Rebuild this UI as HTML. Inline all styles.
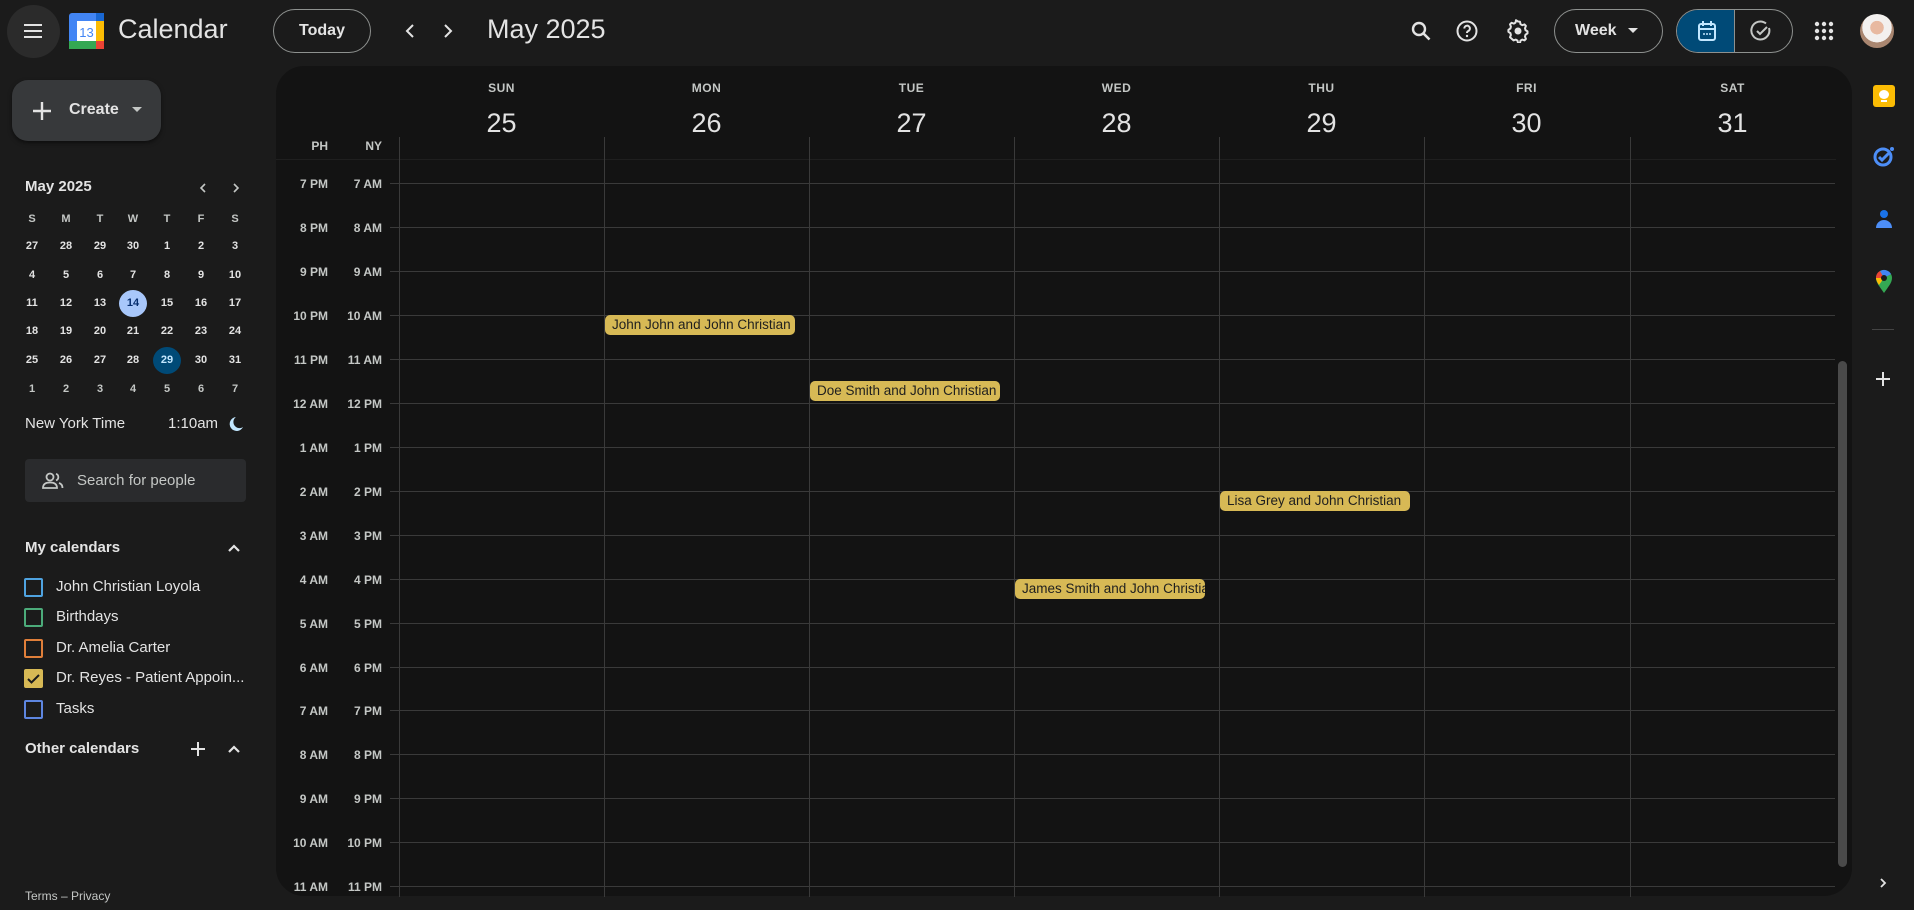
<!DOCTYPE html>
<html><head><meta charset="utf-8"><style>
*{box-sizing:border-box;margin:0;padding:0}
body{width:1914px;height:910px;background:#1b1b1b;font-family:"Liberation Sans",Arial,sans-serif;color:#e3e3e3;position:relative;overflow:hidden}
.a{position:absolute}
.panel{left:276px;top:66px;width:1576px;height:830px;background:#131313;border-radius:28px;overflow:hidden}
.hl{position:absolute;left:390px;width:1445px;height:1px;background:#3a3a3a}
.vl{position:absolute;width:1px;background:#3a3a3a}
.tl{position:absolute;font-size:12px;font-weight:bold;color:#c4c7c5;text-align:right;width:60px}
.dn{position:absolute;width:205px;text-align:center;font-size:12px;font-weight:bold;color:#c4c7c5;letter-spacing:.5px;top:81px}
.dd{position:absolute;width:205px;text-align:center;font-size:27px;color:#e3e3e3;top:108px}
.ev{position:absolute;height:20px;background:#d7b955;border-radius:5px;color:#1f1f1f;font-size:13.5px;line-height:20px;padding-left:7px;white-space:nowrap;overflow:hidden}
.mc{position:absolute;width:28px;text-align:center;font-size:11px;font-weight:bold;color:#e3e3e3;line-height:27px;height:27px;border-radius:50%}
.cb{position:absolute;left:24px;width:19px;height:19px;border:2px solid;border-radius:2px}
.ci{position:absolute;left:56px;font-size:15px;color:#e3e3e3}
</style></head><body>
<div class="a" style="left:7px;top:5px;width:53px;height:53px;border-radius:50%;background:#2b2b2b"></div>
<svg class="a" style="left:21px;top:19px" width="24" height="24" viewBox="0 0 24 24"><path d="M3 6h18M3 12h18M3 18h18" stroke="#e3e3e3" stroke-width="2"/></svg>
<svg class="a" style="left:69px;top:13px" width="35" height="36" viewBox="0 0 35 36"><rect x="0" y="0" width="35" height="36" rx="3" fill="#4285f4"/><rect x="27" y="0" width="8" height="28" fill="#fbbc04"/><rect x="0" y="28" width="27" height="8" fill="#34a853"/><rect x="27" y="28" width="8" height="8" fill="#ea4335"/><rect x="8" y="8" width="19" height="20" fill="#fff"/><text x="17.5" y="24" font-size="13" text-anchor="middle" fill="#4285f4" font-family="Liberation Sans">13</text><rect x="27" y="0" width="8" height="8" fill="#1967d2"/></svg>
<div class="a" style="left:118px;top:14px;font-size:27px;color:#e3e3e3">Calendar</div>
<div class="a" style="left:273px;top:9px;width:98px;height:44px;border:1px solid #8e918f;border-radius:22px;text-align:center;line-height:42px;font-size:16px;font-weight:bold">Today</div>
<svg class="a" style="left:401px;top:21px" width="20" height="20" viewBox="0 0 20 20"><path d="M12 4l-6 6 6 6" stroke="#e3e3e3" stroke-width="2" fill="none"/></svg>
<svg class="a" style="left:437px;top:21px" width="20" height="20" viewBox="0 0 20 20"><path d="M8 4l6 6-6 6" stroke="#e3e3e3" stroke-width="2" fill="none"/></svg>
<div class="a" style="left:487px;top:14px;font-size:27px;color:#e3e3e3">May 2025</div>
<svg class="a" style="left:1409px;top:19px" width="24" height="24" viewBox="0 0 24 24"><circle cx="10" cy="10" r="6" stroke="#e3e3e3" stroke-width="2.4" fill="none"/><path d="M14.5 14.5l6 6" stroke="#e3e3e3" stroke-width="2.6"/></svg>
<svg class="a" style="left:1455px;top:19px" width="24" height="24" viewBox="0 0 24 24"><circle cx="12" cy="12" r="9.5" stroke="#e3e3e3" stroke-width="2" fill="none"/><path d="M9.3 9.5a2.8 2.8 0 1 1 3.8 2.6c-.8.4-1.1.9-1.1 1.9" stroke="#e3e3e3" stroke-width="2" fill="none"/><circle cx="12" cy="17" r="1.2" fill="#e3e3e3"/></svg>
<svg class="a" style="left:1506px;top:19px" width="24" height="24" viewBox="0 0 24 24"><path d="M12 2.5l2 .3.5 2.4 1.7 1 2.3-.8 1.4 1.5-.9 2.3.5 1.9 2 1.3v2l-2 1.3-.5 1.9.9 2.3-1.4 1.5-2.3-.8-1.7 1-.5 2.4h-2l-.5-2.4-1.7-1-2.3.8L4 18.3l.9-2.3-.5-1.9-2-1.3v-2l2-1.3.5-1.9L4 5.3 5.5 3.8l2.3.8 1.7-1L10 1.2z" stroke="#e3e3e3" stroke-width="2" fill="none" stroke-linejoin="round"/><circle cx="12" cy="12" r="3.5" fill="#e3e3e3"/></svg>
<div class="a" style="left:1554px;top:9px;width:109px;height:44px;border:1px solid #8e918f;border-radius:22px;font-size:16px;font-weight:bold;line-height:42px;padding-left:20px">Week</div>
<svg class="a" style="left:1627px;top:27px" width="12" height="8" viewBox="0 0 12 8"><path d="M1 1h10L6 6z" fill="#e3e3e3"/></svg>
<div class="a" style="left:1676px;top:9px;width:117px;height:44px;border:1px solid #8e918f;border-radius:22px;overflow:hidden"><div style="position:absolute;left:0;top:0;width:58px;height:44px;background:#004a77"></div><div style="position:absolute;left:57px;top:0;width:1px;height:44px;background:#8e918f"></div></div>
<svg class="a" style="left:1697px;top:20px" width="20" height="22" viewBox="0 0 20 22"><rect x="2" y="4" width="16" height="16" rx="2" stroke="#c2e7ff" stroke-width="2" fill="none"/><path d="M2 9h16M6 1v5M14 1v5" stroke="#c2e7ff" stroke-width="2"/><path d="M6 14h2M9 14h2M12 14h2" stroke="#c2e7ff" stroke-width="1.5"/></svg>
<svg class="a" style="left:1750px;top:20px" width="22" height="22" viewBox="0 0 22 22"><path d="M19 8A9 9 0 1 1 16 3.5" stroke="#c4c7c5" stroke-width="2" fill="none"/><path d="M7 11l3 3 7-7" stroke="#c4c7c5" stroke-width="2" fill="none"/></svg>
<svg class="a" style="left:1814px;top:21px" width="20" height="20" viewBox="0 0 20 20" fill="#e3e3e3"><circle cx="3" cy="3" r="2.2"/><circle cx="10" cy="3" r="2.2"/><circle cx="17" cy="3" r="2.2"/><circle cx="3" cy="10" r="2.2"/><circle cx="10" cy="10" r="2.2"/><circle cx="17" cy="10" r="2.2"/><circle cx="3" cy="17" r="2.2"/><circle cx="10" cy="17" r="2.2"/><circle cx="17" cy="17" r="2.2"/></svg>
<div class="a" style="left:1860px;top:14px;width:34px;height:34px;border-radius:50%;background:radial-gradient(circle at 50% 40%,#e8b9a0 0 25%,#f3f0ee 26% 55%,#a98670 56%)"></div>

<div class="a" style="left:12px;top:80px;width:149px;height:61px;border-radius:16px;background:#37393b;box-shadow:0 2px 4px rgba(0,0,0,.5)"></div>
<svg class="a" style="left:30px;top:99px" width="24" height="24" viewBox="0 0 24 24"><path d="M12 3v18M3 12h18" stroke="#e3e3e3" stroke-width="2.4"/></svg>
<div class="a" style="left:69px;top:101px;font-size:16px;font-weight:bold">Create</div>
<svg class="a" style="left:132px;top:107px" width="10" height="6" viewBox="0 0 10 6"><path d="M0 0h10L5 5z" fill="#c4c7c5"/></svg>

<div class="a" style="left:25px;top:178px;font-size:15px;font-weight:bold">May 2025</div>
<svg class="a" style="left:196px;top:181px" width="14" height="14" viewBox="0 0 14 14"><path d="M9 3L5 7l4 4" stroke="#c4c7c5" stroke-width="1.6" fill="none"/></svg>
<svg class="a" style="left:229px;top:181px" width="14" height="14" viewBox="0 0 14 14"><path d="M5 3l4 4-4 4" stroke="#c4c7c5" stroke-width="1.6" fill="none"/></svg>
<div class="a" style="left:0;top:0">
<div class="mc" style="left:18px;top:206px;color:#c4c7c5">S</div><div class="mc" style="left:52px;top:206px;color:#c4c7c5">M</div><div class="mc" style="left:86px;top:206px;color:#c4c7c5">T</div><div class="mc" style="left:119px;top:206px;color:#c4c7c5">W</div><div class="mc" style="left:153px;top:206px;color:#c4c7c5">T</div><div class="mc" style="left:187px;top:206px;color:#c4c7c5">F</div><div class="mc" style="left:221px;top:206px;color:#c4c7c5">S</div>
<div class="mc" style="left:18px;top:233px">27</div><div class="mc" style="left:52px;top:233px">28</div><div class="mc" style="left:86px;top:233px">29</div><div class="mc" style="left:119px;top:233px">30</div><div class="mc" style="left:153px;top:233px">1</div><div class="mc" style="left:187px;top:233px">2</div><div class="mc" style="left:221px;top:233px">3</div>
<div class="mc" style="left:18px;top:262px">4</div><div class="mc" style="left:52px;top:262px">5</div><div class="mc" style="left:86px;top:262px">6</div><div class="mc" style="left:119px;top:262px">7</div><div class="mc" style="left:153px;top:262px">8</div><div class="mc" style="left:187px;top:262px">9</div><div class="mc" style="left:221px;top:262px">10</div>
<div class="mc" style="left:18px;top:290px">11</div><div class="mc" style="left:52px;top:290px">12</div><div class="mc" style="left:86px;top:290px">13</div><div class="mc" style="left:119px;top:290px;background:#a8c7fa;color:#062e6f">14</div><div class="mc" style="left:153px;top:290px">15</div><div class="mc" style="left:187px;top:290px">16</div><div class="mc" style="left:221px;top:290px">17</div>
<div class="mc" style="left:18px;top:318px">18</div><div class="mc" style="left:52px;top:318px">19</div><div class="mc" style="left:86px;top:318px">20</div><div class="mc" style="left:119px;top:318px">21</div><div class="mc" style="left:153px;top:318px">22</div><div class="mc" style="left:187px;top:318px">23</div><div class="mc" style="left:221px;top:318px">24</div>
<div class="mc" style="left:18px;top:347px">25</div><div class="mc" style="left:52px;top:347px">26</div><div class="mc" style="left:86px;top:347px">27</div><div class="mc" style="left:119px;top:347px">28</div><div class="mc" style="left:153px;top:347px;background:#004a77;color:#c2e7ff">29</div><div class="mc" style="left:187px;top:347px">30</div><div class="mc" style="left:221px;top:347px">31</div>
<div class="mc" style="left:18px;top:376px;color:#c4c7c5">1</div><div class="mc" style="left:52px;top:376px;color:#c4c7c5">2</div><div class="mc" style="left:86px;top:376px;color:#c4c7c5">3</div><div class="mc" style="left:119px;top:376px;color:#c4c7c5">4</div><div class="mc" style="left:153px;top:376px;color:#c4c7c5">5</div><div class="mc" style="left:187px;top:376px;color:#c4c7c5">6</div><div class="mc" style="left:221px;top:376px;color:#c4c7c5">7</div>
</div>
<div class="a" style="left:25px;top:415px;font-size:15px">New York Time</div>
<div class="a" style="left:168px;top:415px;font-size:15px">1:10am</div>
<svg class="a" style="left:226px;top:415px" width="18" height="18" viewBox="0 0 18 18"><path d="M10 2a7 7 0 1 0 7 10A6 6 0 0 1 10 2z" fill="#c2e7ff"/></svg>

<div class="a" style="left:25px;top:459px;width:221px;height:43px;background:#2a2b2d;border-radius:4px"></div>
<svg class="a" style="left:42px;top:472px" width="22" height="18" viewBox="0 0 22 18"><circle cx="8" cy="5" r="3.5" stroke="#c4c7c5" stroke-width="1.8" fill="none"/><path d="M1 16c0-4 3-5.5 7-5.5s7 1.5 7 5.5z" stroke="#c4c7c5" stroke-width="1.8" fill="none"/><path d="M14 1.8a3.5 3.5 0 0 1 0 6.6M17 11c2 .7 3.5 2 3.5 5" stroke="#c4c7c5" stroke-width="1.8" fill="none"/></svg>
<div class="a" style="left:77px;top:472px;font-size:15px;color:#c4c7c5">Search for people</div>

<div class="a" style="left:25px;top:539px;font-size:15px;font-weight:bold">My calendars</div>
<svg class="a" style="left:226px;top:540px" width="16" height="16" viewBox="0 0 16 16"><path d="M3 11l5-5 5 5" stroke="#e3e3e3" stroke-width="2.2" fill="none"/></svg>
<div class="cb" style="top:578px;border-color:#4fa3e0"></div><div class="ci" style="top:578px">John Christian Loyola</div>
<div class="cb" style="top:608px;border-color:#4cab7a"></div><div class="ci" style="top:608px">Birthdays</div>
<div class="cb" style="top:639px;border-color:#e07f3a"></div><div class="ci" style="top:639px">Dr. Amelia Carter</div>
<div class="cb" style="top:669px;border-color:#d7b955;background:#d7b955"></div><svg class="a" style="left:26px;top:672px" width="15" height="14" viewBox="0 0 15 14"><path d="M2 7l3.5 3.5L13 3" stroke="#1b1b1b" stroke-width="2" fill="none"/></svg><div class="ci" style="top:669px">Dr. Reyes - Patient Appoin...</div>
<div class="cb" style="top:700px;border-color:#5e86e0"></div><div class="ci" style="top:700px">Tasks</div>
<div class="a" style="left:25px;top:740px;font-size:15px;font-weight:bold">Other calendars</div>
<svg class="a" style="left:189px;top:740px" width="18" height="18" viewBox="0 0 18 18"><path d="M9 2v14M2 9h14" stroke="#e3e3e3" stroke-width="2"/></svg>
<svg class="a" style="left:226px;top:741px" width="16" height="16" viewBox="0 0 16 16"><path d="M3 11l5-5 5 5" stroke="#e3e3e3" stroke-width="2.2" fill="none"/></svg>
<div class="a" style="left:25px;top:889px;font-size:12px;color:#c4c7c5">Terms – Privacy</div>

<div class="a panel"></div>
<div class="a" style="left:0;top:0">
<div class="dn" style="left:399px">SUN</div><div class="dn" style="left:604px">MON</div><div class="dn" style="left:809px">TUE</div><div class="dn" style="left:1014px">WED</div><div class="dn" style="left:1219px">THU</div><div class="dn" style="left:1424px">FRI</div><div class="dn" style="left:1630px">SAT</div>
<div class="dd" style="left:399px">25</div><div class="dd" style="left:604px">26</div><div class="dd" style="left:809px">27</div><div class="dd" style="left:1014px">28</div><div class="dd" style="left:1219px">29</div><div class="dd" style="left:1424px">30</div><div class="dd" style="left:1630px">31</div>
<div class="tl" style="left:268px;top:139px">PH</div><div class="tl" style="left:322px;top:139px">NY</div>
<div class="a" style="left:276px;top:159px;width:1560px;height:1px;background:#1f1f1f"></div>
</div>
<div class="vl" style="left:399px;top:137px;height:760px"></div>
<div class="vl" style="left:604px;top:137px;height:760px"></div>
<div class="vl" style="left:809px;top:137px;height:760px"></div>
<div class="vl" style="left:1014px;top:137px;height:760px"></div>
<div class="vl" style="left:1219px;top:137px;height:760px"></div>
<div class="vl" style="left:1424px;top:137px;height:760px"></div>
<div class="vl" style="left:1630px;top:137px;height:760px"></div>
<div class="hl" style="top:183px"></div><div class="hl" style="top:227px"></div><div class="hl" style="top:271px"></div><div class="hl" style="top:315px"></div><div class="hl" style="top:359px"></div><div class="hl" style="top:403px"></div><div class="hl" style="top:447px"></div><div class="hl" style="top:491px"></div><div class="hl" style="top:535px"></div><div class="hl" style="top:579px"></div><div class="hl" style="top:623px"></div><div class="hl" style="top:667px"></div><div class="hl" style="top:710px"></div><div class="hl" style="top:754px"></div><div class="hl" style="top:798px"></div><div class="hl" style="top:842px"></div><div class="hl" style="top:886px"></div>
<div class="a" style="left:0;top:0">
<div class="tl" style="left:268px;top:177px">7 PM</div><div class="tl" style="left:322px;top:177px">7 AM</div>
<div class="tl" style="left:268px;top:221px">8 PM</div><div class="tl" style="left:322px;top:221px">8 AM</div>
<div class="tl" style="left:268px;top:265px">9 PM</div><div class="tl" style="left:322px;top:265px">9 AM</div>
<div class="tl" style="left:268px;top:309px">10 PM</div><div class="tl" style="left:322px;top:309px">10 AM</div>
<div class="tl" style="left:268px;top:353px">11 PM</div><div class="tl" style="left:322px;top:353px">11 AM</div>
<div class="tl" style="left:268px;top:397px">12 AM</div><div class="tl" style="left:322px;top:397px">12 PM</div>
<div class="tl" style="left:268px;top:441px">1 AM</div><div class="tl" style="left:322px;top:441px">1 PM</div>
<div class="tl" style="left:268px;top:485px">2 AM</div><div class="tl" style="left:322px;top:485px">2 PM</div>
<div class="tl" style="left:268px;top:529px">3 AM</div><div class="tl" style="left:322px;top:529px">3 PM</div>
<div class="tl" style="left:268px;top:573px">4 AM</div><div class="tl" style="left:322px;top:573px">4 PM</div>
<div class="tl" style="left:268px;top:617px">5 AM</div><div class="tl" style="left:322px;top:617px">5 PM</div>
<div class="tl" style="left:268px;top:661px">6 AM</div><div class="tl" style="left:322px;top:661px">6 PM</div>
<div class="tl" style="left:268px;top:704px">7 AM</div><div class="tl" style="left:322px;top:704px">7 PM</div>
<div class="tl" style="left:268px;top:748px">8 AM</div><div class="tl" style="left:322px;top:748px">8 PM</div>
<div class="tl" style="left:268px;top:792px">9 AM</div><div class="tl" style="left:322px;top:792px">9 PM</div>
<div class="tl" style="left:268px;top:836px">10 AM</div><div class="tl" style="left:322px;top:836px">10 PM</div>
<div class="tl" style="left:268px;top:880px">11 AM</div><div class="tl" style="left:322px;top:880px">11 PM</div>
</div>
<div class="ev" style="left:605px;top:315px;width:190px">John John and John Christian</div>
<div class="ev" style="left:810px;top:381px;width:190px">Doe Smith and John Christian</div>
<div class="ev" style="left:1015px;top:579px;width:190px">James Smith and John Christian</div>
<div class="ev" style="left:1220px;top:491px;width:190px">Lisa Grey and John Christian</div>
<div class="a" style="left:1838px;top:361px;width:9px;height:506px;background:#4a4a4a;border-radius:5px"></div>

<div class="a" style="left:1873px;top:85px;width:22px;height:22px;border-radius:3px;background:#fbbc04"></div>
<div class="a" style="left:1879px;top:90px;width:10px;height:9px;border-radius:50%;background:#fff"></div>
<div class="a" style="left:1881px;top:100px;width:6px;height:2px;background:#fff"></div>
<svg class="a" style="left:1872px;top:145px" width="24" height="22" viewBox="0 0 24 22"><circle cx="11" cy="12" r="8" stroke="#4d8ef7" stroke-width="3" fill="none"/><path d="M7 12l3 3 8-8" stroke="#4d8ef7" stroke-width="3" fill="none"/><circle cx="20" cy="4" r="2" fill="#4d8ef7"/></svg>
<svg class="a" style="left:1873px;top:208px" width="22" height="22" viewBox="0 0 22 22"><circle cx="11" cy="6" r="4" fill="#1a73e8"/><path d="M3 20c0-5 4-8 8-8s8 3 8 8z" fill="#4d8ef7"/></svg>
<svg class="a" style="left:1873px;top:268px" width="22" height="26" viewBox="0 0 22 26"><path d="M11 25C7 19 3 15 3 10a8 8 0 0 1 16 0c0 5-4 9-8 15z" fill="#34a853"/><path d="M3 10a8 8 0 0 1 4-7l4 7z" fill="#ea4335"/><path d="M7 3a8 8 0 0 1 11 3l-7 4z" fill="#4285f4"/><path d="M3 10h8l-5 7C4 14 3 12 3 10z" fill="#fbbc04"/><circle cx="11" cy="10" r="3" fill="#1b1b1b"/></svg>
<div class="a" style="left:1872px;top:329px;width:22px;height:1px;background:#444"></div>
<svg class="a" style="left:1874px;top:370px" width="18" height="18" viewBox="0 0 18 18"><path d="M9 2v14M2 9h14" stroke="#e3e3e3" stroke-width="2"/></svg>
<svg class="a" style="left:1876px;top:876px" width="14" height="14" viewBox="0 0 14 14"><path d="M5 3l4 4-4 4" stroke="#e3e3e3" stroke-width="1.8" fill="none"/></svg>
</body></html>
